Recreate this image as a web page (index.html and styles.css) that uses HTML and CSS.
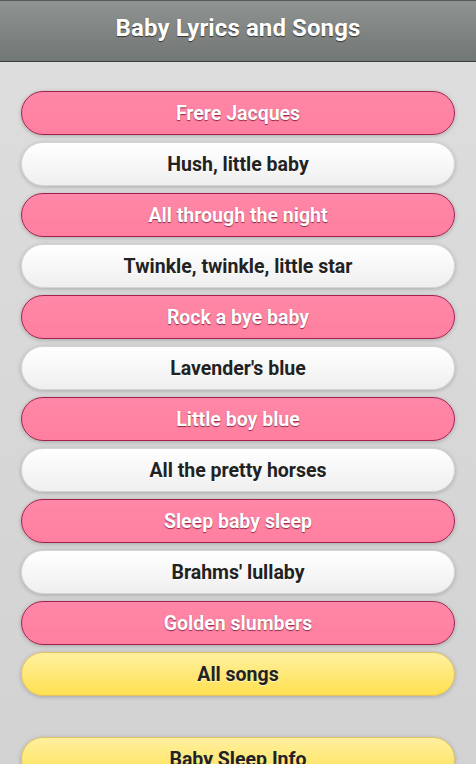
FILE: index.html
```html
<!DOCTYPE html>
<html>
<head>
<meta charset="utf-8">
<link rel="stylesheet" href="styles.css">
</head>
<body>
<header class="bar"><h1 class="title">Baby Lyrics and Songs</h1></header>
<main class="list">
  <div class="btn pink">Frere Jacques</div>
  <div class="btn white">Hush, little baby</div>
  <div class="btn pink">All through the night</div>
  <div class="btn white">Twinkle, twinkle, little star</div>
  <div class="btn pink">Rock a bye baby</div>
  <div class="btn white">Lavender's blue</div>
  <div class="btn pink">Little boy blue</div>
  <div class="btn white">All the pretty horses</div>
  <div class="btn pink">Sleep baby sleep</div>
  <div class="btn white">Brahms' lullaby</div>
  <div class="btn pink">Golden slumbers</div>
  <div class="btn yellow">All songs</div>
  <div class="btn yellow spaced">Baby Sleep Info</div>
</main>
</body>
</html>
```
FILE: styles.css
```css
html, body {
  margin: 0;
  padding: 0;
  height: 100%;
  overflow: hidden;
}
body {
  font-family: Roboto, "Liberation Sans", sans-serif;
  background: linear-gradient(#dedede, #d2d2d2);
}
.bar {
  border-top: 1px solid #555a58;
  border-bottom: 1px solid #3a3d3c;
  box-sizing: border-box;
  height: 62px;
  background: linear-gradient(#8f9392, #717775);
  display: flex;
  align-items: center;
  justify-content: center;
}
.title {
  margin: 0 0 6px 0;
  font-size: 24px;
  font-weight: bold;
  letter-spacing: 0.1px;
  color: #fff;
  text-shadow: 0 1px 1px #333;
}
.list {
  padding: 29px 21px 0 21px;
  display: flex;
  flex-direction: column;
  gap: 7px;
}
.btn {
  height: 44px;
  box-sizing: border-box;
  border-radius: 22px;
  display: flex;
  align-items: center;
  justify-content: center;
  font-size: 19.5px;
  font-weight: bold;
  box-shadow: 0 1px 4px rgba(0,0,0,0.22);
}
.pink {
  background: linear-gradient(#ff87a7, #ff7fa0);
  border: 1px solid #a3214f;
  color: #fff;
  text-shadow: 0 1px 1px #8a2a48;
}
.white {
  background: linear-gradient(#ffffff, #efefef);
  border: 1px solid #d4d4d4;
  color: #222;
  text-shadow: 0 1px 0 #fff;
}
.yellow {
  background: linear-gradient(#fff0a0, #ffe050);
  border: 1px solid #e2c262;
  color: #222;
  text-shadow: 0 1px 0 #fff6c8;
}
.spaced {
  margin-top: 34px;
}
```
